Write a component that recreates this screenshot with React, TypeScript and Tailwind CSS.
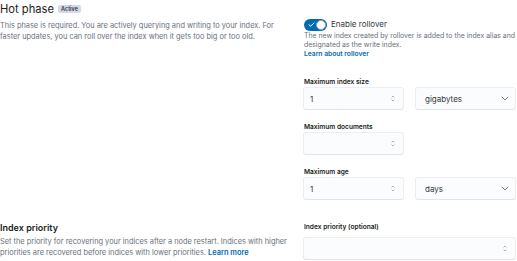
import React from "react";

const font = { fontFamily: "Inter, 'Noto Sans', sans-serif" };

function Spinner() {
  return (
    <svg width="4" height="7" viewBox="0 0 4 7" fill="none" stroke="#98a2b3" strokeWidth="0.8" aria-hidden="true">
      <path d="M0.6 2.4 L2 1 L3.4 2.4" />
      <path d="M0.6 4.6 L2 6 L3.4 4.6" />
    </svg>
  );
}

function Chevron() {
  return (
    <svg width="8" height="5" viewBox="0 0 8 5" fill="none" stroke="#69707d" strokeWidth="0.9" aria-hidden="true">
      <path d="M0.8 0.8 L4 4 L7.2 0.8" />
    </svg>
  );
}

function NumberInput({ value, className = "" }: { value?: string; className?: string }) {
  return (
    <div
      className={`flex h-[21px] items-center justify-between rounded-[2px] bg-[#fbfcfd] pl-[6px] pr-[8px] text-[8px] text-[#343741] shadow-[0_0_0_1px_rgba(15,39,118,0.08),0_1px_1px_rgba(15,39,118,0.05)] ${className}`}
    >
      <span>{value ?? ""}</span>
      <Spinner />
    </div>
  );
}

function SelectInput({ value }: { value: string }) {
  return (
    <div className="flex h-[21px] w-[99px] items-center justify-between rounded-[2px] bg-[#fbfcfd] pl-[9px] pr-[6px] text-[8px] text-[#343741] shadow-[0_0_0_1px_rgba(15,39,118,0.08),0_1px_1px_rgba(15,39,118,0.05)]">
      <span>{value}</span>
      <Chevron />
    </div>
  );
}

function Label({ children, className = "" }: { children: React.ReactNode; className?: string }) {
  return (
    <div className={`text-[6.6px] font-semibold leading-[10px] text-[#1a1c21] ${className}`}>{children}</div>
  );
}

export default function App() {
  return (
    <div className="h-[261px] w-[517px] overflow-hidden bg-white" style={font}>
      {/* Hot phase row */}
      <div className="flex gap-[14px]">
        <div className="w-[290px]">
          <div className="flex items-center gap-[4px] pt-[1px]">
            <h2 className="text-[11.2px] leading-[16px] text-[#1a1c21]">Hot phase</h2>
            <span className="rounded-[2px] bg-[#d3dae6] px-[3px] text-[5.5px] font-semibold leading-[8px] text-[#343741]">
              Active
            </span>
          </div>
          <p className="mt-[3px] text-[7.4px] leading-[11px] text-[#69707d]">
            This phase is required. You are actively querying and writing to your index. For faster updates, you
            can roll over the index when it gets too big or too old.
          </p>
        </div>

        <div className="w-[212px] pt-[18px]">
          <div className="flex items-center gap-[4px]">
            <div className="flex h-[12px] w-[23px] items-center justify-between rounded-full bg-[#006bb4] pl-[4px] pr-[1px]">
              <svg width="7" height="5" viewBox="0 0 7 5" fill="none" stroke="white" strokeWidth="1" aria-hidden="true">
                <path d="M0.6 2.5 L2.6 4.2 L6.4 0.7" />
              </svg>
              <div className="h-[10px] w-[10px] rounded-full border border-[#98a2b3] bg-white" />
            </div>
            <span className="text-[8px] leading-[13px] text-[#343741]">Enable rollover</span>
          </div>
          <p className="text-[6.9px] leading-[9px] text-[#69707d]">
            The new index created by rollover is added to the index alias and designated as the write index.
          </p>
          <a className="block text-[6.7px] font-semibold leading-[10px] text-[#006bb4]">Learn about rollover</a>

          <Label className="mt-[18px]">Maximum index size</Label>
          <div className="mt-[1px] flex gap-[13px]">
            <NumberInput value="1" className="w-[99px]" />
            <SelectInput value="gigabytes" />
          </div>

          <Label className="mt-[13px]">Maximum documents</Label>
          <div className="mt-[1px] flex">
            <NumberInput className="w-[99px]" />
          </div>

          <Label className="mt-[13px]">Maximum age</Label>
          <div className="mt-[1px] flex gap-[13px]">
            <NumberInput value="1" className="w-[99px]" />
            <SelectInput value="days" />
          </div>
        </div>
      </div>

      {/* Index priority row */}
      <div className="mt-[23px] flex gap-[14px]">
        <div className="w-[290px]">
          <h3 className="text-[9px] font-semibold leading-[12px] text-[#1a1c21]">Index priority</h3>
          <p className="mt-[2px] text-[7.4px] leading-[11px] text-[#69707d]">
            Set the priority for recovering your indices after a node restart. Indices with higher priorities are
            recovered before indices with lower priorities. <span className="font-semibold text-[#006bb4]">Learn more</span>
          </p>
        </div>
        <div className="w-[212px]">
          <Label>Index priority (optional)</Label>
          <NumberInput className="mt-[6px] w-[211px]" />
        </div>
      </div>
    </div>
  );
}
